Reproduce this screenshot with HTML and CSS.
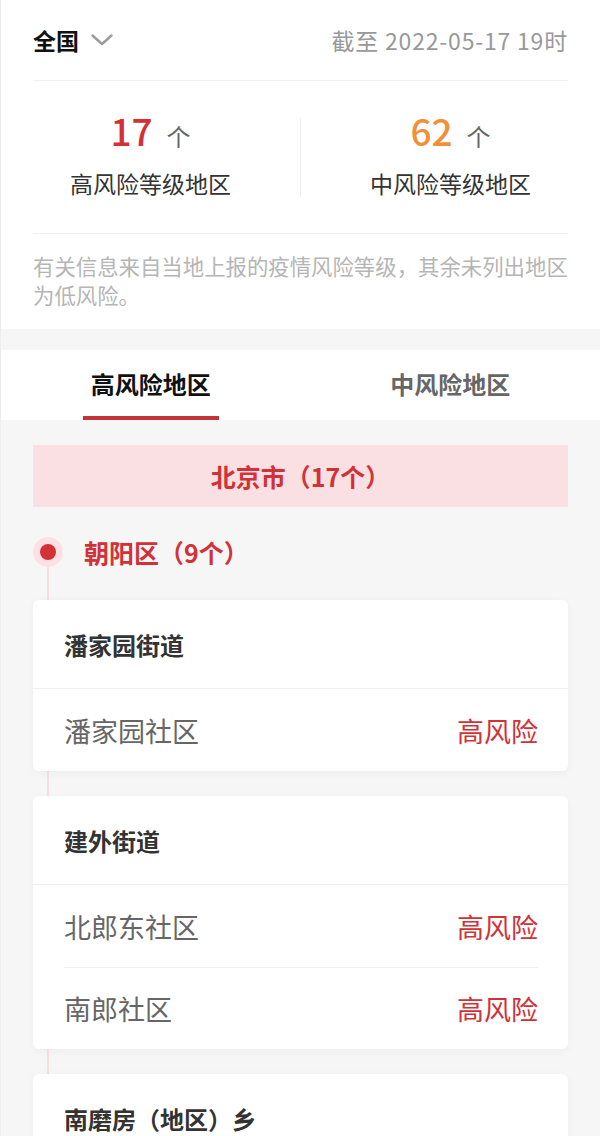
FILE: index.html
```html
<!DOCTYPE html>
<html lang="zh-CN">
<head>
<meta charset="utf-8">
<title>风险等级地区</title>
<link rel="stylesheet" href="styles.css">
</head>
<body>
<div class="page">
  <section class="summary">
    <div class="topbar">
      <div class="region">
        <span class="region-name">全国</span>
        <svg class="chevron" width="22" height="12" viewBox="0 0 22 12"><path d="M1.5 1.5 L11 10 L20.5 1.5" fill="none" stroke="#9a9a9a" stroke-width="2.4" stroke-linecap="round" stroke-linejoin="round"/></svg>
      </div>
      <div class="date">截至 2022-05-17 19时</div>
    </div>
    <div class="stats">
      <div class="stat">
        <div class="stat-num"><span class="num high">17</span><span class="unit">个</span></div>
        <div class="stat-label">高风险等级地区</div>
      </div>
      <div class="stat-divider"></div>
      <div class="stat">
        <div class="stat-num"><span class="num mid">62</span><span class="unit">个</span></div>
        <div class="stat-label">中风险等级地区</div>
      </div>
    </div>
    <div class="note"><p class="note-text">有关信息来自当地上报的疫情风险等级，其余未列出地区为低风险。</p></div>
  </section>

  <nav class="tabs">
    <div class="tab active"><span>高风险地区</span></div>
    <div class="tab"><span>中风险地区</span></div>
  </nav>

  <main class="list">
    <div class="city">北京市（17个）</div>
    <div class="district">
      <div class="district-head">
        <span class="dot"><span class="dot-inner"></span></span>
        <span class="district-name">朝阳区（9个）</span>
      </div>
      <div class="timeline">
        <div class="card">
          <div class="card-title">潘家园街道</div>
          <div class="rows">
            <div class="row"><span class="row-name">潘家园社区</span><span class="row-level">高风险</span></div>
          </div>
        </div>
        <div class="card">
          <div class="card-title">建外街道</div>
          <div class="rows">
            <div class="row"><span class="row-name">北郎东社区</span><span class="row-level">高风险</span></div>
            <div class="row"><span class="row-name">南郎社区</span><span class="row-level">高风险</span></div>
          </div>
        </div>
        <div class="card">
          <div class="card-title">南磨房（地区）乡</div>
        </div>
      </div>
    </div>
  </main>
</div>
</body>
</html>
```
FILE: styles.css
```css
* { box-sizing: border-box; }
html, body { margin: 0; padding: 0; }
body {
  font-family: "Noto Sans CJK SC", "Noto Sans", sans-serif;
  background: #f6f6f6;
  color: #333;
  text-spacing-trim: space-all;
}
.page {
  border-left: 1px solid #ececec;
  height: 1136px;
  overflow: hidden;
}
.summary {
  background: #fff;
}
.topbar {
  margin: 0 32px;
  height: 81px;
  display: flex;
  align-items: center;
  justify-content: space-between;
  border-bottom: 1px solid #f0f0f0;
}
.region { display: flex; align-items: center; gap: 12px; }
.region-name { font-size: 23px; font-weight: 700; color: #111; }
.chevron { display: block; }
.date { font-size: 23px; color: #999; letter-spacing: 0.8px; }
.stats {
  display: flex;
  align-items: center;
  height: 152px;
}
.stat {
  flex: 1;
  align-self: stretch;
  display: flex;
  flex-direction: column;
  align-items: center;
  padding-top: 26px;
}
.stat-num { display: flex; align-items: baseline; gap: 14px; height: 46px; line-height: 46px; margin-bottom: 15px; }
.num { font-size: 37px; font-weight: 500; }
.num.high { color: #d23137; }
.num.mid { color: #f0913a; }
.unit { font-size: 24px; color: #666; }
.stat-label { font-size: 23px; color: #333; line-height: 30px; }
.stat-divider { width: 1px; height: 79px; background: #eee; }
.note {
  margin: 0 32px;
  border-top: 1px solid #f0f0f0;
  padding: 17px 0 20px;
}
.note-text {
  margin: 0 -12px 0 0;
  font-size: 21.4px;
  line-height: 29px;
  color: #b5b5b5;
}
.tabs {
  margin-top: 21px;
  background: #fff;
  display: flex;
  height: 70px;
}
.tab {
  flex: 1;
  display: flex;
  justify-content: center;
}
.tab span {
  display: block;
  width: 136px;
  text-align: center;
  font-size: 24px;
  font-weight: 700;
  color: #666;
  line-height: 68px;
  height: 70px;
  border-bottom: 4px solid transparent;
  white-space: nowrap;
}
.tab.active span { color: #111; border-bottom-color: #c1343a; }
.list { padding: 25px 32px 0; }
.city {
  height: 62px;
  background: #fae0e3;
  color: #d23137;
  font-size: 25px;
  font-weight: 700;
  display: flex;
  align-items: center;
  justify-content: center;
}
.district-head {
  display: flex;
  align-items: center;
  gap: 21px;
  margin-top: 30px;
  height: 30px;
}
.dot {
  width: 30px;
  height: 30px;
  border-radius: 50%;
  background: #fbe1e4;
  display: flex;
  align-items: center;
  justify-content: center;
  flex: none;
}
.dot-inner { width: 16px; height: 16px; border-radius: 50%; background: #d23137; }
.district-name { font-size: 25px; font-weight: 700; color: #d23137; }
.timeline {
  position: relative;
  padding-top: 33px;
  display: flex;
  flex-direction: column;
  gap: 25px;
}
.timeline::before {
  content: "";
  position: absolute;
  left: 14px;
  top: 0;
  bottom: 0;
  width: 2px;
  background: #fbdde1;
}
.card {
  position: relative;
  background: #fff;
  border-radius: 6px;
  box-shadow: 0 2px 10px rgba(0,0,0,0.04);
}
.card-title {
  height: 88px;
  padding: 0 31px;
  display: flex;
  align-items: center;
  font-size: 24px;
  font-weight: 700;
  color: #333;
}
.rows { border-top: 1px solid #f0f0f0; padding: 0 30px 0 31px; }
.row {
  height: 82px;
  display: flex;
  align-items: center;
  justify-content: space-between;
  border-top: 1px solid #f0f0f0;
}
.row:first-child { border-top: none; }
.row-name { font-size: 27px; color: #666; }
.row-level { font-size: 27px; color: #d23137; }
```
